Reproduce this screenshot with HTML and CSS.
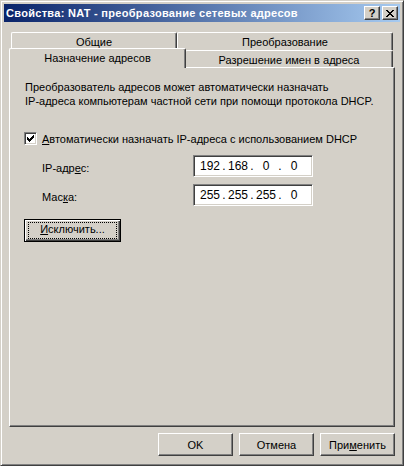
FILE: index.html
```html
<!DOCTYPE html>
<html lang="ru">
<head>
  <meta charset="UTF-8">
  <title>Свойства: NAT</title>
  <link rel="stylesheet" href="styles.css">
</head>
<body>
  <div class="window">
    <!-- заголовок окна -->
    <div class="titlebar">
      <span class="title">Свойства: NAT - преобразование сетевых адресов</span>
      <div class="caption-btns">
        <span class="cap-btn help">?</span>
        <span class="cap-btn close">
          <svg width="8" height="7" viewBox="0 0 8 7" shape-rendering="crispEdges">
            <path d="M0 0h2v1h-2zM6 0h2v1h-2zM1 1h2v1h-2zM5 1h2v1h-2zM2 2h4v1h-4zM3 3h2v1h-2zM2 4h4v1h-4zM1 5h2v1h-2zM5 5h2v1h-2zM0 6h2v1h-2zM6 6h2v1h-2z" fill="#000"/>
          </svg>
        </span>
      </div>
    </div>

    <div class="body">
      <!-- вкладки -->
      <div class="tabs">
        <div class="tab-row row-back">
          <div class="tab tab-general">Общие</div>
          <div class="tab tab-nat">Преобразование</div>
        </div>
        <div class="tab-row row-front">
          <div class="tab tab-assign active">Назначение адресов</div>
          <div class="tab tab-resolve">Разрешение имен в адреса</div>
        </div>
      </div>

      <div class="panel">
        <p class="desc">Преобразователь адресов может автоматически назначать<br>IP-адреса компьютерам частной сети при помощи протокола DHCP.</p>

        <div class="check-row">
          <span class="checkbox">
            <svg width="7" height="7" viewBox="0 0 7 7" shape-rendering="crispEdges">
              <path d="M6 0h1v1h-1zM5 1h2v1h-2zM0 2h1v1h-1zM4 2h3v1h-3zM0 3h2v1h-2zM3 3h3v1h-3zM0 4h5v1h-5zM1 5h3v1h-3zM2 6h1v1h-1z" fill="#000"/>
            </svg>
          </span>
          <span class="check-label"><u>А</u>втоматически назначать IP-адреса с использованием DHCP</span>
        </div>

        <div class="field-row">
          <span class="field-label">IP-адр<u>е</u>с:</span>
          <div class="ip-box">
            <span class="octet">192</span><span class="dot">.</span>
            <span class="octet">168</span><span class="dot">.</span>
            <span class="octet">0</span><span class="dot">.</span>
            <span class="octet">0</span>
          </div>
        </div>

        <div class="field-row mask-row">
          <span class="field-label">Мас<u>к</u>а:</span>
          <div class="ip-box">
            <span class="octet">255</span><span class="dot">.</span>
            <span class="octet">255</span><span class="dot">.</span>
            <span class="octet">255</span><span class="dot">.</span>
            <span class="octet">0</span>
          </div>
        </div>

        <button class="btn btn-focus exclude"><span class="focus-rect"><u>И</u>сключить...</span></button>
      </div>

      <!-- кнопки диалога -->
      <div class="dialog-buttons">
        <button class="btn">OK</button>
        <button class="btn">Отмена</button>
        <button class="btn">При<u>м</u>енить</button>
      </div>
    </div>
  </div>
</body>
</html>
```

FILE: styles.css
```css
/* базовые стили */
html, body {
  margin: 0;
  padding: 0;
  background: #d4d0c8;
}
*, *::before, *::after {
  box-sizing: border-box;
}
body {
  font-family: 'Liberation Sans', Arial, sans-serif;
  font-size: 11px;
  color: #000;
}
u {
  text-decoration: underline;
  text-underline-offset: 1px;
}

/* окно */
.window {
  width: 404px;
  height: 466px;
  background: #d4d0c8;
  border: 1px solid;
  border-color: #d4d0c8 #404040 #404040 #d4d0c8;
  box-shadow: inset 1px 1px #fff, inset -1px -1px #808080;
  padding: 3px;
}
.titlebar {
  height: 18px;
  display: flex;
  align-items: center;
  justify-content: space-between;
  padding: 0 2px 0 2px;
  background: linear-gradient(to right, #0a246a, #a6caf0);
}
.title {
  color: #fff;
  font-weight: bold;
  font-size: 11px;
  letter-spacing: 0.3px;
  white-space: nowrap;
}
.caption-btns {
  display: flex;
  gap: 2px;
}
.cap-btn {
  width: 16px;
  height: 14px;
  display: flex;
  align-items: center;
  justify-content: center;
  background: #d4d0c8;
  border: 1px solid;
  border-color: #fff #404040 #404040 #fff;
  box-shadow: inset -1px -1px #808080;
  font-weight: bold;
  font-size: 11px;
  line-height: 12px;
}
.cap-btn.close svg {
  display: block;
  margin-left: -1px;
}

/* содержимое */
.body {
  padding: 10px 5px 0 5px;
}
.tab-row {
  display: flex;
  padding: 0 2px;
}
.row-back {
  height: 18px;
}
.row-front {
  height: 17px;
  align-items: flex-start;
}
.tab {
  height: 18px;
  padding-top: 1px;
  line-height: 16px;
  text-align: center;
  white-space: nowrap;
  background: #d4d0c8;
  border-top: 1px solid #fff;
  border-left: 1px solid #fff;
  border-right: 1px solid #404040;
  border-radius: 2px 2px 0 0;
  box-shadow: inset -1px 0 #808080;
}
.tab-general {
  width: 166px;
}
.tab-nat {
  flex: 1;
}
.tab-assign {
  width: 177px;
  margin-left: -2px;
  margin-right: -1px;
}
.tab-resolve {
  flex: 1;
  height: 17px;
}
.tab.active {
  position: relative;
  z-index: 1;
  height: 20px;
  margin-top: -2px;
}

.panel {
  height: 360px;
  border: 1px solid;
  border-color: #fff #404040 #404040 #fff;
  box-shadow: inset -1px -1px #808080;
  padding: 12px 14px 0 14px;
}
.desc {
  margin: 0 0 0 1px;
  line-height: 14px;
  white-space: nowrap;
}
.check-row {
  display: flex;
  align-items: center;
  gap: 5px;
  margin-top: 24px;
  height: 13px;
}
.checkbox {
  width: 13px;
  height: 13px;
  flex: none;
  background: #fff;
  border: 1px solid;
  border-color: #808080 #fff #fff #808080;
  box-shadow: inset 1px 1px #404040, inset -1px -1px #d4d0c8;
  padding: 2px 0 0 2px;
}
.checkbox svg {
  display: block;
}
.check-label {
  white-space: nowrap;
}
.field-row {
  display: flex;
  align-items: center;
  margin-top: 10px;
  padding-left: 18px;
}
.mask-row {
  margin-top: 7px;
}
.field-label {
  width: 151px;
  padding-top: 3px;
}
.ip-box {
  width: 120px;
  height: 22px;
  display: flex;
  align-items: center;
  padding-left: 4px;
  background: #fff;
  border: 1px solid;
  border-color: #808080 #fff #fff #808080;
  box-shadow: inset 1px 1px #404040, inset -1px -1px #d4d0c8;
  font-size: 12px;
}
.octet {
  width: 24px;
  text-align: center;
}
.dot {
  width: 4px;
  text-align: center;
}

/* кнопки */
.btn {
  font-family: inherit;
  font-size: 11px;
  font-weight: normal;
  color: #000;
  background: #d4d0c8;
  border: 1px solid;
  border-color: #fff #404040 #404040 #fff;
  box-shadow: inset -1px -1px #808080;
  padding: 0;
  width: 75px;
  height: 23px;
  display: flex;
  align-items: center;
  justify-content: center;
}
.btn-focus {
  border-color: #000;
  box-shadow: inset 1px 1px #fff, inset -1px -1px #404040, inset -2px -2px #808080;
}
.exclude {
  width: 97px;
  margin-top: 13px;
}
.focus-rect {
  display: block;
  width: 87px;
  height: 15px;
  line-height: 13px;
  outline: 1px dotted #000;
  margin-top: -1px;
}
.dialog-buttons {
  display: flex;
  justify-content: flex-end;
  gap: 6px;
  margin-top: 6px;
}
```
